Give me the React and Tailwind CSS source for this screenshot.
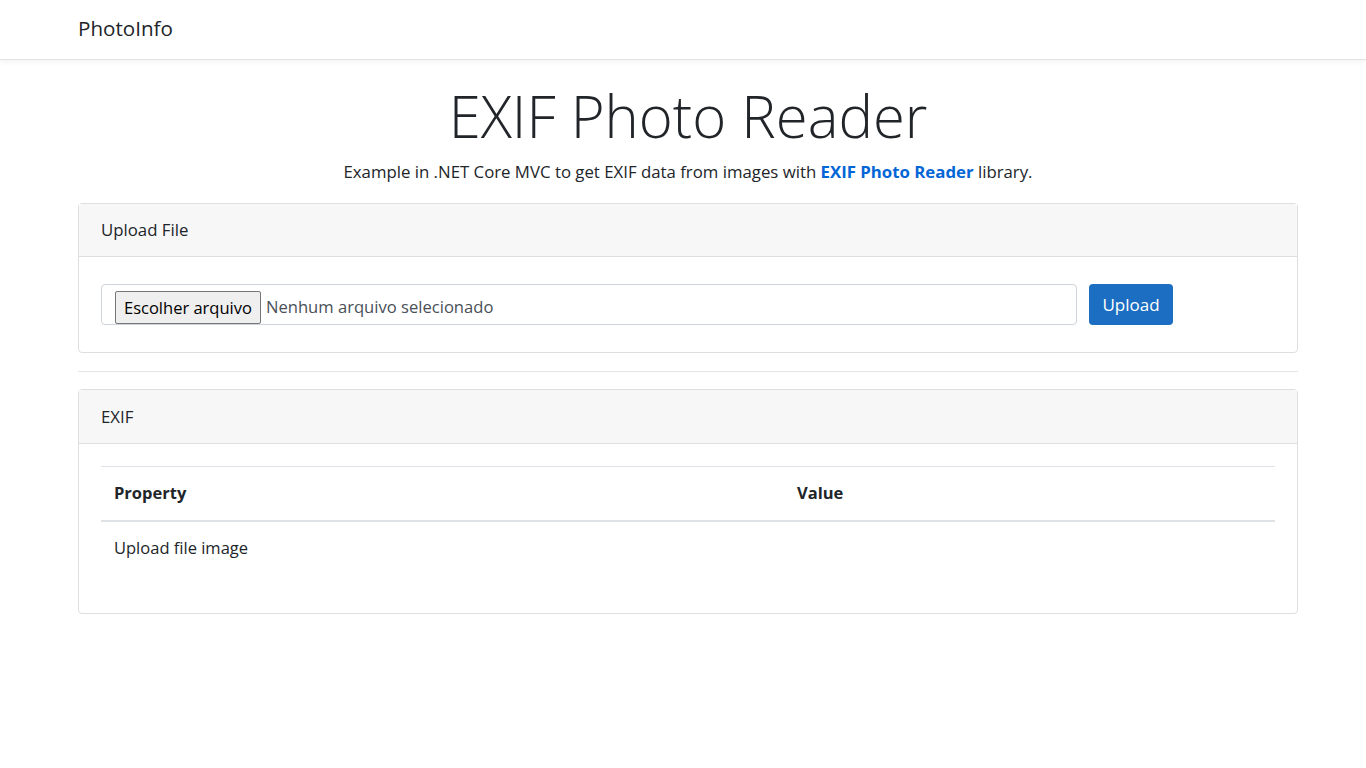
import React from "react";

export default function App() {
  return (
    <div className="min-h-[768px] bg-white text-[#212529]" style={{ fontFamily: '"Open Sans", "Noto Sans", sans-serif' }}>
      <nav className="h-[60px] border-b border-[#e2e2e2] bg-white shadow-[0_2px_6px_rgba(0,0,0,0.05)]">
        <div className="ml-[78px] flex h-full w-[1220px] items-center pb-[3px]">
          <span className="text-[20.6px] leading-none text-[#212529]">PhotoInfo</span>
        </div>
      </nav>
      <main className="ml-[78px] w-[1220px]">
        <div className="pt-[20px] text-center">
          <h1 className="text-[58px] font-light leading-[72px] text-[#212529]">EXIF Photo Reader</h1>
          <p className="mt-[8px] text-[16.8px] leading-[24px]">
            Example in .NET Core MVC to get EXIF data from images with{" "}
            <a className="font-bold text-[#0366d6]">EXIF Photo Reader</a> library.
          </p>
        </div>

        <section className="mt-[19px] rounded-[4px] border border-[#dfdfdf]">
          <div className="flex h-[53px] items-center border-b border-[#dfdfdf] bg-[#f7f7f7] px-[22px] text-[16.8px]">
            Upload File
          </div>
          <div className="flex items-center gap-[12px] px-[22px] py-[27px]">
            <div className="flex h-[41px] w-[976px] items-end rounded-[4px] border border-[#ced4da] pl-[13px]">
              <div className="flex h-[33px] items-center rounded-[2px] border border-[#767676] bg-[#efefef] px-[8px] pt-[2px] text-[16.5px] text-black">
                Escolher arquivo
              </div>
              <span className="mb-[4px] ml-[5px] text-[16.6px] text-[#495057]">Nenhum arquivo selecionado</span>
            </div>
            <button className="h-[41px] w-[84px] rounded-[4px] bg-[#1b6ec2] text-[17px] text-white">Upload</button>
          </div>
        </section>

        <hr className="mb-[17px] mt-[18px] border-t border-[#e5e5e5]" />

        <section className="rounded-[4px] border border-[#dfdfdf]">
          <div className="flex h-[54px] items-center border-b border-[#dfdfdf] bg-[#f7f7f7] px-[22px] text-[16.8px]">
            EXIF
          </div>
          <div className="px-[22px] pb-[22px] pt-[22px]">
            <table className="mb-[16px] w-full border-collapse text-[16.5px]">
              <thead>
                <tr className="border-t border-[#dee2e6]">
                  <th className="h-[54px] w-[683px] border-b-2 border-[#dee2e6] px-[13px] text-left font-bold">Property</th>
                  <th className="h-[54px] border-b-2 border-[#dee2e6] px-[13px] text-left font-bold">Value</th>
                </tr>
              </thead>
              <tbody>
                <tr>
                  <td className="h-[54px] px-[13px]">Upload file image</td>
                  <td className="h-[54px] px-[13px]"></td>
                </tr>
              </tbody>
            </table>
          </div>
        </section>
      </main>
    </div>
  );
}
